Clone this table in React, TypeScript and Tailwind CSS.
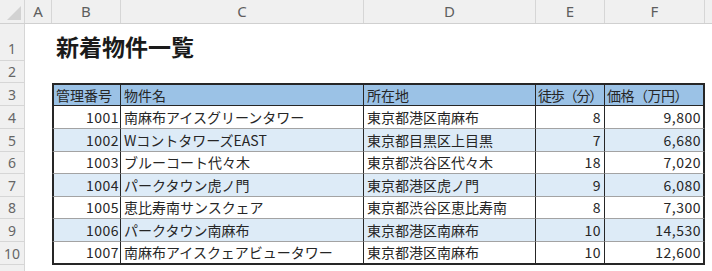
import React from 'react';

const rows = [
  { no: 1001, name: '南麻布アイスグリーンタワー', addr: '東京都港区南麻布', walk: 8, price: '9,800', h: 'h-[23px]' },
  { no: 1002, name: 'WコントタワーズEAST', addr: '東京都目黒区上目黒', walk: 7, price: '6,680', h: 'h-[23px]' },
  { no: 1003, name: 'ブルーコート代々木', addr: '東京都渋谷区代々木', walk: 18, price: '7,020', h: 'h-[22px]' },
  { no: 1004, name: 'パークタウン虎ノ門', addr: '東京都港区虎ノ門', walk: 9, price: '6,080', h: 'h-[23px]' },
  { no: 1005, name: '恵比寿南サンスクェア', addr: '東京都渋谷区恵比寿南', walk: 8, price: '7,300', h: 'h-[22px]' },
  { no: 1006, name: 'パークタウン南麻布', addr: '東京都港区南麻布', walk: 10, price: '14,530', h: 'h-[23px]' },
  { no: 1007, name: '南麻布アイスクェアビュータワー', addr: '東京都港区南麻布', walk: 10, price: '12,600', h: 'h-[23px]' },
];

const colHeads = [
  { label: 'A', w: 'w-[27px]' },
  { label: 'B', w: 'w-[69px]' },
  { label: 'C', w: 'w-[243px]' },
  { label: 'D', w: 'w-[172px]' },
  { label: 'E', w: 'w-[69px]' },
  { label: 'F', w: 'w-[100px]' },
];

function RowHead({ n, className = '' }: { n?: number; className?: string }) {
  return (
    <div
      className={`flex w-[25px] shrink-0 justify-center border-r border-b border-[#d6d6d6] bg-[#f0f0f0] text-[14px] text-[#666] ${className}`}
      style={{ fontFamily: '"Noto Sans", sans-serif' }}
    >
      {n}
    </div>
  );
}

export default function App() {
  const cell = 'flex shrink-0 items-center overflow-hidden whitespace-nowrap';
  return (
    <div
      className="h-[271px] w-[712px] overflow-hidden bg-white text-[14px] text-[#262626]"
      style={{ fontFamily: '"Noto Sans CJK JP", "Noto Sans", sans-serif' }}
    >
      {/* column headers */}
      <div className="flex h-[24px] border-b border-[#d0d0d0] bg-[#f0f0f0]">
        <div className="relative w-[25px] shrink-0 border-r border-[#d6d6d6]">
          <svg className="absolute right-[3px] bottom-[3px]" width="14" height="14" viewBox="0 0 14 14">
            <polygon points="14,0 14,14 0,14" fill="#d2d2d2" />
          </svg>
        </div>
        {colHeads.map((c) => (
          <div
            key={c.label}
            className={`${c.w} flex shrink-0 items-center justify-center border-r border-[#d6d6d6] text-[15px] text-[#5e5e5e]`}
            style={{ fontFamily: '"Noto Sans", sans-serif' }}
          >
            {c.label}
          </div>
        ))}
        <div className="flex-1" />
      </div>

      {/* row 1: title */}
      <div className="flex h-[37px]">
        <RowHead n={1} className="items-end pb-[1px]" />
        <div className="w-[27px] shrink-0" />
        <div className="flex items-end pb-[3px] pl-[4px] text-[23px] leading-none font-bold text-[#1a1a1a]">
          新着物件一覧
        </div>
      </div>

      {/* row 2 */}
      <div className="flex h-[22px]">
        <RowHead n={2} className="items-center" />
      </div>

      {/* row 3: table header */}
      <div className="flex h-[23px]">
        <RowHead n={3} className="items-center" />
        <div className="w-[27px] shrink-0" />
        <div className={`${cell} w-[69px] border-t-2 border-b border-l-2 border-r border-[#262626] bg-[#9bc2e6] pl-[2px]`}>管理番号</div>
        <div className={`${cell} w-[243px] border-t-2 border-b border-r border-[#262626] bg-[#9bc2e6] pl-[3px]`}>物件名</div>
        <div className={`${cell} w-[172px] border-t-2 border-b border-r border-[#262626] bg-[#9bc2e6] pl-[3px]`}>所在地</div>
        <div className={`${cell} w-[69px] border-t-2 border-b border-r border-[#262626] bg-[#9bc2e6] pl-[2px] tracking-[-1.2px]`}>徒歩（分）</div>
        <div className={`${cell} w-[100px] border-t-2 border-b border-r-2 border-[#262626] bg-[#9bc2e6] pl-[2px] tracking-[-0.5px]`}>価格（万円）</div>
      </div>

      {/* data rows */}
      {rows.map((r, i) => {
        const last = i === rows.length - 1;
        const bg = i % 2 === 1 ? 'bg-[#ddebf7]' : 'bg-white';
        const bottom = last ? 'border-b-2 border-b-[#262626]' : 'border-b border-b-[#a3a3a3]';
        return (
          <div key={r.no} className={`flex ${r.h}`}>
            <RowHead n={i + 4} className="items-center" />
            <div className="w-[27px] shrink-0" />
            <div className={`${cell} ${bg} ${bottom} w-[69px] justify-end border-l-2 border-r border-l-[#262626] border-r-[#262626] pr-[1px] tracking-[0.5px]`}>{r.no}</div>
            <div className={`${cell} ${bg} ${bottom} w-[243px] border-r border-r-[#262626] pl-[3px]`}>{r.name}</div>
            <div className={`${cell} ${bg} ${bottom} w-[172px] border-r border-r-[#262626] pl-[3px]`}>{r.addr}</div>
            <div className={`${cell} ${bg} ${bottom} w-[69px] justify-end border-r border-r-[#262626] pr-[3px] tracking-[0.5px]`}>{r.walk}</div>
            <div className={`${cell} ${bg} ${bottom} w-[100px] justify-end border-r-2 border-r-[#262626] pr-[2px] tracking-[0.5px]`}>{r.price}</div>
          </div>
        );
      })}

      {/* row 11 (partly visible, number below the edge) */}
      <div className="flex h-[23px]">
        <RowHead className="items-center" />
      </div>
    </div>
  );
}
